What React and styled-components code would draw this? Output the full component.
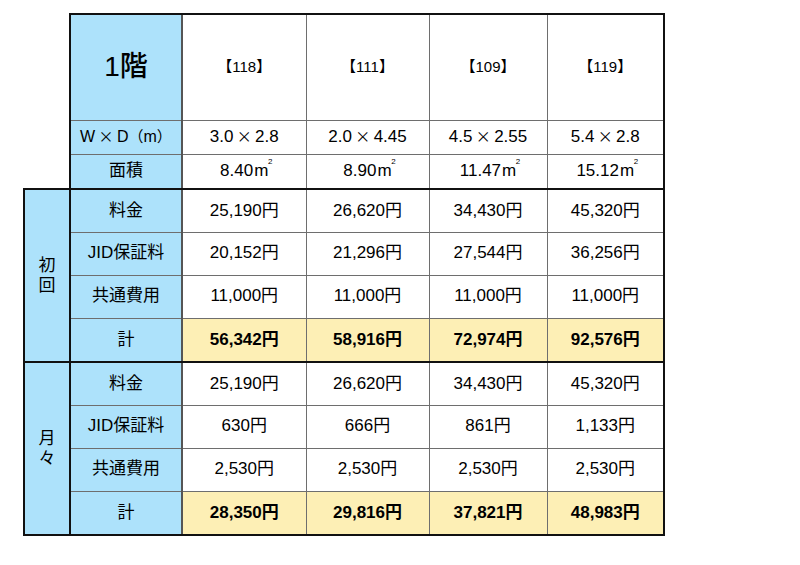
import React from "react";
import styled, { createGlobalStyle } from "styled-components";

const Global = createGlobalStyle`
  html, body { margin: 0; padding: 0; background: #fff; }
  body { font-family: "Liberation Sans", "Noto Sans CJK JP", sans-serif; }
`;

const BLUE = "#ade2fb";
const YELLOW = "#fdefb5";
const LINE = "1px solid #6e6e6e";
const DARK = "2px solid #111";

const Page = styled.div`
  width: 800px;
  height: 565px;
  padding: 13px 0 0 23px;
  box-sizing: border-box;
`;

const Table = styled.table`
  border-collapse: collapse;
  table-layout: fixed;
  width: 642px;
  font-family: "Liberation Sans", "Noto Sans CJK JP", sans-serif;
  color: #000;
`;

const Row = styled.tr`
  height: ${(p) => p.$h}px;
`;

const Empty = styled.td`
  border: none;
  padding: 0;
`;

const Cell = styled.td`
  padding: 0;
  text-align: center;
  vertical-align: middle;
  background: ${(p) => (p.$bg === "blue" ? BLUE : p.$bg === "yellow" ? YELLOW : "#fff")};
  font-size: ${(p) => p.$size || 17}px;
  font-weight: ${(p) => (p.$bold ? 700 : 400)};
  line-height: 1.2;
  border-top: ${(p) => (p.$top ? DARK : LINE)};
  border-bottom: ${(p) => (p.$bottom ? DARK : LINE)};
  border-left: ${(p) => (p.$left ? DARK : p.$vline ? "2px solid #555" : LINE)};
  border-right: ${(p) => (p.$right ? DARK : LINE)};
  white-space: nowrap;
`;

const Section = styled(Cell)`
  font-size: 17px;
  line-height: 20px;
  border-right: ${DARK};
`;

const Title = styled.span`
  font-size: 28px;
  font-weight: 500;
  letter-spacing: 0;
`;

const Sym = styled.span`
  font-family: "Noto Sans CJK JP", sans-serif;
  font-size: 15px;
`;

const Unit = styled.span`
  position: relative;
  margin-left: 1px;
`;

const Sup = styled.span`
  position: absolute;
  top: -3px;
  right: -4px;
  font-size: 8px;
  line-height: 1;
`;

const rooms = ["118", "111", "109", "119"];
const dims = [
  ["3.0", "2.8"],
  ["2.0", "4.45"],
  ["4.5", "2.55"],
  ["5.4", "2.8"],
];
const areas = ["8.40", "8.90", "11.47", "15.12"];

const sections = [
  {
    name: ["初", "回"],
    rows: [
      ["料金", ["25,190円", "26,620円", "34,430円", "45,320円"]],
      ["JID保証料", ["20,152円", "21,296円", "27,544円", "36,256円"]],
      ["共通費用", ["11,000円", "11,000円", "11,000円", "11,000円"]],
      ["計", ["56,342円", "58,916円", "72,974円", "92,576円"], true],
    ],
  },
  {
    name: ["月", "々"],
    rows: [
      ["料金", ["25,190円", "26,620円", "34,430円", "45,320円"]],
      ["JID保証料", ["630円", "666円", "861円", "1,133円"]],
      ["共通費用", ["2,530円", "2,530円", "2,530円", "2,530円"]],
      ["計", ["28,350円", "29,816円", "37,821円", "48,983円"], true],
    ],
  },
];

const widths = [46, 112, 124, 123, 118, 117];
const rowH = [43, 43, 43, 44];

export default function App() {
  return (
    <Page>
      <Global />
      <Table>
        <colgroup>
          {widths.map((w, i) => (
            <col key={i} style={{ width: w }} />
          ))}
        </colgroup>
        <tbody>
          <Row $h={106}>
            <Empty />
            <Cell $bg="blue" $top $left>
              <Title>1階</Title>
            </Cell>
            {rooms.map((r, i) => (
              <Cell key={r} $top $size={15} $vline={i === 0} $right={i === 3}>
                【{r}】
              </Cell>
            ))}
          </Row>
          <Row $h={34}>
            <Empty />
            <Cell $bg="blue" $left $size={16}>
              W<Sym> × </Sym>D<Sym>（</Sym>m<Sym>）</Sym>
            </Cell>
            {dims.map((d, i) => (
              <Cell key={i} $vline={i === 0} $right={i === 3}>
                {d[0]}
                <Sym> × </Sym>
                {d[1]}
              </Cell>
            ))}
          </Row>
          <Row $h={35}>
            <Empty />
            <Cell $bg="blue" $left $bottom>
              面積
            </Cell>
            {areas.map((a, i) => (
              <Cell key={a} $bottom $vline={i === 0} $right={i === 3}>
                {a}
                <Unit>
                  m<Sup>2</Sup>
                </Unit>
              </Cell>
            ))}
          </Row>
          {sections.map((s, si) =>
            s.rows.map(([label, vals, total], ri) => (
              <Row key={`${si}-${ri}`} $h={rowH[ri]}>
                {ri === 0 && (
                  <Section rowSpan={4} $bg="blue" $top $left $bottom>
                    {s.name[0]}
                    <br />
                    {s.name[1]}
                  </Section>
                )}
                <Cell $bg="blue" $top={ri === 0} $bottom={ri === 3}>
                  {label}
                </Cell>
                {vals.map((v, i) => (
                  <Cell
                    key={i}
                    $bg={total ? "yellow" : undefined}
                    $bold={total}
                    $top={ri === 0}
                    $bottom={ri === 3}
                    $vline={i === 0}
                    $right={i === 3}
                  >
                    {v}
                  </Cell>
                ))}
              </Row>
            ))
          )}
        </tbody>
      </Table>
    </Page>
  );
}
